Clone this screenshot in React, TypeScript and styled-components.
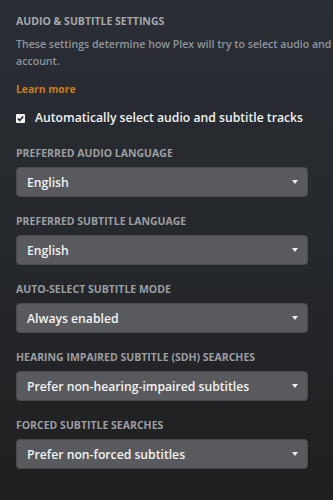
import React from "react";
import styled, { createGlobalStyle } from "styled-components";

const Global = createGlobalStyle`
  html, body { margin: 0; padding: 0; }
  body {
    width: 333px;
    height: 500px;
    overflow: hidden;
    background: linear-gradient(180deg, #2a2e35 0%, #25282c 50%, #1f1f20 100%);
    font-family: "Open Sans", "Noto Sans", sans-serif;
  }
`;

const Page = styled.div`
  padding: 13px 0 0 16px;
  width: 292px;
`;

const Heading = styled.h2`
  margin: 0;
  font-size: 10.5px;
  line-height: 16px;
  font-weight: 700;
  color: #a6a8ab;
  text-transform: uppercase;
`;

const Description = styled.p`
  margin: 7px 0 0;
  width: 317px;
  overflow: hidden;
  white-space: nowrap;
  font-size: 10.6px;
  line-height: 17px;
  font-weight: 600;
  color: #8f959b;
`;

const LearnMore = styled.a`
  display: block;
  margin-top: 11px;
  font-size: 10.3px;
  line-height: 16px;
  font-weight: 700;
  color: #cc7b19;
  text-decoration: none;
`;

const CheckRow = styled.label`
  display: flex;
  align-items: center;
  gap: 10px;
  margin-top: 11px;
  font-size: 12.2px;
  line-height: 20px;
  font-weight: 600;
  color: #f1f1f1;
`;

const Box = styled.span`
  width: 9px;
  height: 9px;
  background: #f4f4f4;
  border-radius: 1px;
  display: flex;
  align-items: center;
  justify-content: center;
`;

const Field = styled.div<{ $first?: boolean }>`
  margin-top: ${(p) => (p.$first ? "18px" : "17px")};
  display: flex;
  flex-direction: column;
  gap: 7px;
`;

const Label = styled.div`
  font-size: 10.5px;
  line-height: 14px;
  font-weight: 700;
  color: #9c9ea1;
  text-transform: uppercase;
`;

const Select = styled.div`
  height: 30px;
  box-sizing: border-box;
  display: flex;
  align-items: center;
  justify-content: space-between;
  padding: 0 9px 0 10px;
  background: #595a5d;
  border: 1px solid #4a4b4e;
  border-radius: 4px;
  color: #f2f2f2;
  font-size: 12.2px;
  font-weight: 600;
`;

const Caret = styled.span`
  width: 0;
  height: 0;
  border-left: 3.5px solid transparent;
  border-right: 3.5px solid transparent;
  border-top: 4px solid #eeeeee;
`;

const fields = [
  ["Preferred audio language", "English"],
  ["Preferred subtitle language", "English"],
  ["Auto-select subtitle mode", "Always enabled"],
  ["Hearing impaired subtitle (SDH) searches", "Prefer non-hearing-impaired subtitles"],
  ["Forced subtitle searches", "Prefer non-forced subtitles"],
];

export default function App() {
  return (
    <>
      <Global />
      <Page>
        <Heading>Audio &amp; Subtitle Settings</Heading>
        <Description>
          These settings determine how Plex will try to select audio and subtitle tracks for your
          <br />
          account.
        </Description>
        <LearnMore href="#">Learn more</LearnMore>
        <CheckRow>
          <Box>
            <svg width="7" height="7" viewBox="0 0 8 8">
              <path d="M1 4.2 L3.1 6.2 L7 1.6" stroke="#222" strokeWidth="1.8" fill="none" />
            </svg>
          </Box>
          Automatically select audio and subtitle tracks
        </CheckRow>
        {fields.map(([l, v], i) => (
          <Field key={l} $first={i === 0}>
            <Label>{l}</Label>
            <Select>
              <span>{v}</span>
              <Caret />
            </Select>
          </Field>
        ))}
      </Page>
    </>
  );
}
